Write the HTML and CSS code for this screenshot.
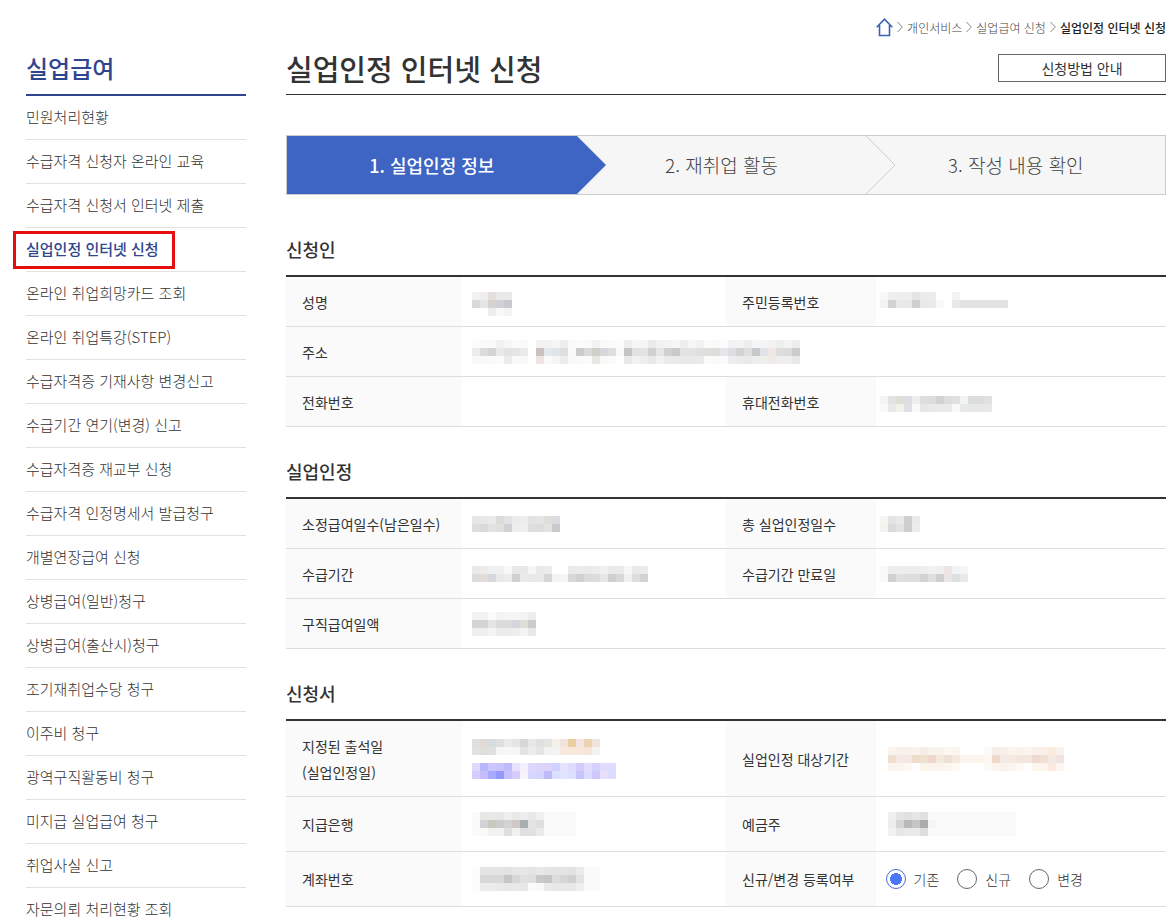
FILE: index.html
```html
<!DOCTYPE html>
<html lang="ko">
<head>
<meta charset="utf-8">
<title>실업인정 인터넷 신청</title>
<link rel="stylesheet" href="styles.css">
</head>
<body>
<div class="page">
  <aside class="sidebar">
    <h2 class="side-title">실업급여</h2>
    <ul class="side-menu">
      <li><a href="#">민원처리현황</a></li>
      <li><a href="#">수급자격 신청자 온라인 교육</a></li>
      <li><a href="#">수급자격 신청서 인터넷 제출</a></li>
      <li><a href="#" class="current" aria-current="page">실업인정 인터넷 신청</a></li>
      <li><a href="#">온라인 취업희망카드 조회</a></li>
      <li><a href="#">온라인 취업특강(STEP)</a></li>
      <li><a href="#">수급자격증 기재사항 변경신고</a></li>
      <li><a href="#">수급기간 연기(변경) 신고</a></li>
      <li><a href="#">수급자격증 재교부 신청</a></li>
      <li><a href="#">수급자격 인정명세서 발급청구</a></li>
      <li><a href="#">개별연장급여 신청</a></li>
      <li><a href="#">상병급여(일반)청구</a></li>
      <li><a href="#">상병급여(출산시)청구</a></li>
      <li><a href="#">조기재취업수당 청구</a></li>
      <li><a href="#">이주비 청구</a></li>
      <li><a href="#">광역구직활동비 청구</a></li>
      <li><a href="#">미지급 실업급여 청구</a></li>
      <li><a href="#">취업사실 신고</a></li>
      <li><a href="#">자문의뢰 처리현황 조회</a></li>
    </ul>
  </aside>

  <main class="main">
    <nav class="breadcrumb" aria-label="현재 위치">
      <a href="#" class="home" aria-label="홈"><svg width="17" height="19" viewBox="0 0 17 19"><path d="M.7 9.3 8.5 1.2l7.8 8.1M3.5 7v10.5h10V7" fill="none" stroke="#3b63ad" stroke-width="1.6"/></svg></a>
      <svg class="sep" width="6" height="12" viewBox="0 0 6 12"><path d="M.5 1 5.3 6 .5 11"/></svg>
      <a href="#">개인서비스</a>
      <svg class="sep" width="6" height="12" viewBox="0 0 6 12"><path d="M.5 1 5.3 6 .5 11"/></svg>
      <a href="#">실업급여 신청</a>
      <svg class="sep" width="6" height="12" viewBox="0 0 6 12"><path d="M.5 1 5.3 6 .5 11"/></svg>
      <span class="here">실업인정 인터넷 신청</span>
    </nav>
    <header class="title-row">
      <h1>실업인정 인터넷 신청</h1>
      <button type="button" class="guide">신청방법 안내</button>
    </header>

    <ol class="steps">
      <li class="active">1. 실업인정 정보<svg class="tip" width="30" height="58" viewBox="0 0 30 58"><path d="M0 0 29 29 0 58z" fill="#3e65c3"/></svg></li>
      <li>2. 재취업 활동<svg class="tip" width="30" height="58" viewBox="0 0 30 58"><path d="M0 0 29 29 0 58" fill="none" stroke="#ccc"/></svg></li>
      <li>3. 작성 내용 확인</li>
    </ol>

    <section>
      <h2>신청인</h2>
      <table>
        <colgroup><col class="c1"><col class="c2"><col class="c3"><col class="c4"></colgroup>
        <tr><th scope="row">성명</th><td class="low"><span class="mosaic" data-m="name"></span></td><th scope="row">주민등록번호</th><td class="low"><span class="mosaic" data-m="rrn"></span></td></tr>
        <tr><th scope="row">주소</th><td colspan="3"><span class="mosaic" data-m="address"></span></td></tr>
        <tr><th scope="row">전화번호</th><td></td><th scope="row">휴대전화번호</th><td class="low"><span class="mosaic" data-m="mobile"></span></td></tr>
      </table>
    </section>

    <section>
      <h2>실업인정</h2>
      <table>
        <colgroup><col class="c1"><col class="c2"><col class="c3"><col class="c4"></colgroup>
        <tr><th scope="row">소정급여일수(남은일수)</th><td><span class="mosaic" data-m="days"></span></td><th scope="row">총 실업인정일수</th><td><span class="mosaic" data-m="total"></span></td></tr>
        <tr><th scope="row">수급기간</th><td><span class="mosaic" data-m="period"></span></td><th scope="row">수급기간 만료일</th><td><span class="mosaic" data-m="expiry"></span></td></tr>
        <tr><th scope="row">구직급여일액</th><td colspan="3"><span class="mosaic" data-m="daily"></span></td></tr>
      </table>
    </section>

    <section>
      <h2>신청서</h2>
      <table class="form">
        <colgroup><col class="c1"><col class="c2"><col class="c3"><col class="c4"></colgroup>
        <tr class="double"><th scope="row">지정된 출석일<br>(실업인정일)</th><td><span class="mosaic" data-m="visit"></span></td><th scope="row">실업인정 대상기간</th><td><span class="mosaic" data-m="target"></span></td></tr>
        <tr><th scope="row">지급은행</th><td><span class="mosaic" data-m="bank"></span></td><th scope="row">예금주</th><td><span class="mosaic" data-m="holder"></span></td></tr>
        <tr><th scope="row">계좌번호</th><td><span class="mosaic" data-m="account"></span></td><th scope="row">신규/변경 등록여부</th>
          <td><div class="radios">
            <label><input type="radio" name="reg" checked>기존</label>
            <label><input type="radio" name="reg">신규</label>
            <label><input type="radio" name="reg">변경</label>
          </div></td></tr>
      </table>
    </section>
  </main>
</div>
<script src="mosaic.js"></script>
</body>
</html>
```
FILE: styles.css
```css
* { box-sizing: border-box; }
body {
  margin: 0;
  background: #fff;
  color: #333;
  font-family: "Noto Sans CJK KR", sans-serif;
  font-size: 14px;
}
h1, h2, ul, ol { margin: 0; padding: 0; }
ul, ol { list-style: none; }
a { color: inherit; text-decoration: none; }

.page {
  display: flex;
  gap: 40px;
  height: 100vh;
  overflow: hidden;
  padding: 12px 8px 0 26px;
}
.sidebar { flex: 0 0 220px; padding-top: 30px; }
.side-title {
  height: 54px;
  border-bottom: 2px solid #2f458f;
  color: #2f458f;
  font-size: 24px;
  font-weight: 500;
  line-height: 52px;
}
.side-menu li { height: 44px; border-bottom: 1px solid #e2e2e2; }
.side-menu a {
  display: inline-block;
  position: relative;
  color: #333;
  font-size: 15px;
  font-weight: 300;
  line-height: 41px;
}
.side-menu .current { color: #2f458f; font-weight: 500; }
.side-menu .current::after {
  content: "";
  position: absolute;
  inset: 3px -16px 0 -13px;
  border: 3px solid #e60f0f;
}

.main { flex: 1; min-width: 0; }
.breadcrumb {
  display: flex;
  align-items: center;
  justify-content: flex-end;
  gap: 4px;
  height: 30px;
  color: #444;
  font-size: 12px;
  font-weight: 300;
}
.home { display: flex; }
.sep path { fill: none; stroke: #888; }
.here { color: #222; font-weight: 500; }
.title-row {
  display: flex;
  align-items: center;
  justify-content: space-between;
  height: 53px;
  border-bottom: 1px solid #333;
}
h1 { font-size: 29px; font-weight: 500; line-height: 52px; }
.guide {
  width: 168px;
  height: 28px;
  padding: 0;
  border: 1px solid #666;
  background: #fff;
  color: #333;
  font: 400 14px/24px "Noto Sans CJK KR", sans-serif;
}

.steps {
  display: grid;
  grid-template-columns: 33fr 33fr 34fr;
  margin: 40px 0;
  border: 1px solid #ccc;
  background: #f6f6f6;
}
.steps li {
  position: relative;
  color: #444;
  font-size: 19px;
  font-weight: 300;
  line-height: 58px;
  text-align: center;
}
.steps .active { background: #3e65c3; color: #fff; font-size: 18px; font-weight: 500; }
.tip { position: absolute; top: 0; left: 100%; z-index: 1; }

section { margin-bottom: 30px; }
section h2 { padding-bottom: 12px; font-size: 18px; font-weight: 500; line-height: 28px; }
table {
  width: 100%;
  border-top: 2px solid #333;
  border-spacing: 0;
  table-layout: fixed;
}
.c1 { width: 20%; }
.c2 { width: 30%; }
.c3 { width: 17%; }
.c4 { width: 33%; }
th, td { height: 50px; padding: 0; border-bottom: 1px solid #ddd; }
th {
  padding-left: 16px;
  background: #fafafa;
  font-weight: 400;
  line-height: 26px;
  text-align: left;
}
td { padding-left: 10px; }
td:nth-child(4) { padding-left: 4px; }
.low { padding-top: 5px; }
.form th, .form td { height: 55px; }
.form .double th, .form .double td { height: 76px; }
.mosaic, .mosaic svg { display: block; }

.radios { display: flex; gap: 18px; padding-left: 6px; }
.radios label { display: flex; align-items: center; gap: 8px; font-weight: 300; }
.radios input {
  appearance: none;
  width: 20px;
  height: 20px;
  margin: 0;
  border: 1px solid #666;
  border-radius: 50%;
  background: #fff;
}
.radios input:checked {
  border-color: #4a6bd8;
  background: radial-gradient(circle, #4a76f8 0 6px, #fff 6px);
}
```
FILE: mosaic.js
```js
// Masked personal data: 8px cells. "." is empty, two digits a grey, six digits a colour.
const MASKS = {
  name: [
    "f2 ee e4dfdd e9 e9",
    "d9 e5 d6d2cf d0d0d7 c9c9cd",
    ". . ee f8 f4"],
  rrn: [
    "faf8f6 ecf0f2 ee ee e2e4e6 ec ec . . f3 . . . . . .",
    "f3 d3 e9 e8 cf e9 ea f8 . e9 e2 e2 e2 e2 e2 e2",
    ". . . . . . . . . . . . . . . ."],
  address: [
    "fc fa fa f1 f6 fb fa . f2 f2 f6 ee fa fb fa f2 fa fb fc ee f6 f5 ea f2 f3 f6 ee f6 f2 fb fa fc f2 f4 ee f6 f5 f2 ee f4 ed",
    "ec dc d5 e9 e3 e5 ea . c9c2bf e4e8ea e0e5e7 df fa cb d9 cfcec8 d6d6dc df fa c4 e2 e4 d0 e6 d0 ca e2 e1e3e5 e0 df dfddd7 e6e6ec df d3 df c9 dee4e8 efe7e3 dd db cb",
    "f8 f9 fa fb ec f9 f8 . eee4e2 fa f5 ec f9 fa fb e8e8e2 f9 fb . e8e9ea f2 ee e8e9ea f2 eb ea e9 e9 ea fb fa fb ee ec e9 ee efefec f0ebe8 ee ef e8"],
  mobile: [
    "f4 e3 dfdfda dcdce1 ee dd dc d2 dd e0 f1f4f3 dc dc e1",
    "f8 e9 f4f1eb dfdfe4 f8 e6 e9 ea ea f8f9f8 e5eae8 e7 e7 e8"],
  days: [
    "e6 e8 ea dddbd9 e0e2e4 ec ed e2 e5 dfdfda dcdcdf",
    "de da e2 dfdfdb d1 ee ef de dd e2 ca"],
  total: [
    "f7f5f2 e4 e8e9ea cf ea",
    "f5f3f0 dadbdc e3 ce ec"],
  period: [
    "ea ec edf1f3 f0 f8 e8 e8 f6 e9 ec . . ea eb ea ec f0 e9 ea f6 e9 eb",
    "dc e3dcd7 d5d9dd e9 ec d0 ea e8 e9 d6 f3 f6 d8 d0 db dc e6 cf d8 f0 dd d2"],
  expiry: [
    "fbf9f7 ed ed ed ed ee f1 ef ede5e4 f1f4f5 f4f6f7",
    "f9 d1 df dd dd d3 df cf ebe5e6 dce1e0 e7eae9"],
  daily: [
    "f2 f2 fb f3 f5 f5 f3f3f0 ed",
    "d4 d4 e5 db db d5d5dd dfdfd7 cb",
    "ef ef f4 ec ec ee f4 e8"],
  visit: [
    "df e1dad5 d8dcdf df ea e5 d7 e8 e0 e4 f5f0ea f0e4dc ebcda0 f2e5e2 edd4b0 efe3dc",
    "e2 dedfdb df f4f7f9 f7 f6 e3 ec e4 f2 f4 f6e8df f8e8dc f8e8dc f7e6d8 f5f1ef",
    ".",
    "dfd9fc b9b7fb cbc6fe c8c3fd bfbcfb e7e0fe f3f1fd ded9fc dcd5fc dcd2fa cfd1fe e5e2ff dddcff d3ccfb e0dcfc d4d0fb e0dcfc dedcff",
    "d5cdfb c3bdfc a9a9ff 9498fc c7c0fe d5ccfd f6f3fd d7d6fe d5d4fc bfb9f8 dce0ff dfe4ff dce1ff c8c3fb dbdaff cfc8fc e9dffb dedcff"],
  target: [
    ". faf3ee f8f1eb f8f1eb faf2ed f6ede7 f9f3ed faf3ec fbf7f2 fcf5ed . . . fcfaf6 f9eee7 f7efe8 fbf3ec faf3ec fbf5ef f9f0e8 faf0e9 faebe1 f9f3ef",
    ". efdfce f5e9e4 f3e8e3 eedbcb eedfce edd8cb f4e8df f0dfd5 f4e8df fbf4ee fcf5ee fcf5ee fcf7f2 efd9cd f5e9e4 f5e9e2 f4e6dd f4e6dd ecd9d0 f2dfd4 f4e9e1 f1e3df",
    ". fcf5ef fbf3ed fcf8f4 . faf4ec faf4ec faf4ed fcf6f0 fdf9f3 . . . fdf9f5 fbf4ec faf3eb faf4ee fdf9f6 . fcf6ef fcf4ee faeadf fdf6f0"],
  bank: [
    "fb e7 e8 e7 ef e9 ee e8 f0 fa fa fa fa",
    "fb d1d3d7 c8c8bf cdcdcf d3 cfcac7 abaeb1 e4 df fa fa fa fa",
    "fb fa f2 f2 df f1 e0 e1 ea fa fa fa fa"],
  holder: [
    ". f0 e4 e1 e6 e0 fa fa fa fa fa fa fa fa fa fa fa",
    ". ed d4 b9 c9c5c5 a9abac f6 fa fa fa fa fa fa fa fa fa fa",
    ". f1 e6 ea ea de fa fa fa fa fa fa fa fa fa fa fa"],
  account: [
    "fc e5 e5 e5 e2 e6 e7 e4 e8 e5 e3 e4 e2 eb fb fb",
    "fc d8 d8 d8 c5 d7 e0 df c9 c5 dc d6 d0 e3 fb fb",
    "fc ec ebedec e8e9ea e7 e9 e8 fb f9 e9ebea e7 e8 e8 ee fb fb"]
};
const CELL = 8;
for (const el of document.querySelectorAll(".mosaic")) {
  const rows = MASKS[el.dataset.m].map(r => r.split(" "));
  const w = Math.max(...rows.map(r => r.length)) * CELL, h = rows.length * CELL;
  const cells = rows.map((row, y) => row.map((c, x) => c === "." ? "" :
    `<rect x="${x * CELL}" y="${y * CELL}" width="${CELL}" height="${CELL}" fill="#${c.length === 2 ? c.repeat(3) : c}"/>`).join("")).join("");
  el.innerHTML = `<svg width="${w}" height="${h}" shape-rendering="crispEdges" aria-hidden="true">${cells}</svg>`;
}
```
